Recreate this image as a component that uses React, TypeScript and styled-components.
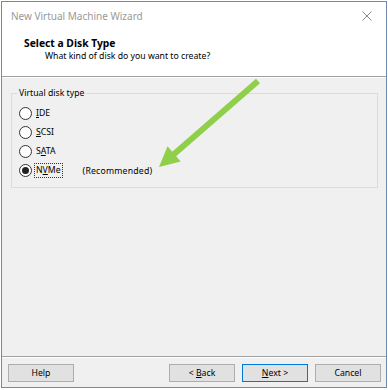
import styled, { createGlobalStyle } from 'styled-components';

const GlobalStyle = createGlobalStyle`
  html, body {
    margin: 0;
    padding: 0;
    background: #fff;
  }
  body {
    font-family: 'Noto Sans', 'Liberation Sans', sans-serif;
    font-size: 8.7px;
    color: #000;
  }
`;

const WizardWindow = styled.div`
  position: relative;
  margin: 1px 0 0 1px;
  width: 386px;
  height: 387px;
  box-sizing: border-box;
  border: 1px solid #6f8aab;
  background: #f0f0f0;
  display: flex;
  flex-direction: column;
`;

const TitleBar = styled.div`
  height: 27px;
  background: #fff;
  display: flex;
  align-items: center;
  justify-content: space-between;
  padding: 0 14px 1px 9px;
`;

const TitleText = styled.span`
  font-size: 10px;
  color: #999;
  line-height: 14px;
`;

const Header = styled.div`
  background: #fff;
  height: 47px;
  box-sizing: border-box;
  padding: 7px 0 0 22px;
  border-bottom: 1px solid #a0a0a0;
`;

const HeaderTitle = styled.div`
  font-weight: 700;
  font-size: 10.3px;
  line-height: 13px;
`;

const HeaderSubtitle = styled.div`
  line-height: 12px;
  padding-left: 21px;
`;

const Body = styled.div`
  flex: 1;
  padding: 8px 8px 0 9px;
  border-top: 1px solid #fff;
`;

const GroupBox = styled.fieldset`
  margin: 0;
  border: 1px solid #dcdcdc;
  padding: 4px 8px 5px 6px;
  height: 102px;
  box-sizing: border-box;
`;

const GroupLegend = styled.legend`
  padding: 0 2px;
  margin-left: -1px;
  line-height: 14px;
`;

const RadioRow = styled.label`
  display: flex;
  align-items: center;
  height: 19px;
`;

const RadioCircle = styled.span<{ $checked?: boolean }>`
  width: 13px;
  height: 13px;
  box-sizing: border-box;
  border-radius: 50%;
  border: 1px solid #333;
  background: #fff;
  margin: 0 3px 0 1px;
  display: flex;
  align-items: center;
  justify-content: center;

  &::after {
    content: '';
    display: ${p => (p.$checked ? 'block' : 'none')};
    width: 7px;
    height: 7px;
    border-radius: 50%;
    background: #222;
  }
`;

const RadioLabel = styled.span<{ $focused?: boolean }>`
  line-height: 13px;
  padding: 0 1px;
  outline: ${p => (p.$focused ? '1px dotted #333' : 'none')};
`;

const Hint = styled.span`
  margin-left: 21px;
  letter-spacing: 0.2px;
`;

const Footer = styled.div`
  border-top: 1px solid #a0a0a0;
  box-shadow: inset 0 1px 0 #fff;
  display: flex;
  align-items: center;
  padding: 7px 5px 5px 6px;
  gap: 7px;
`;

const Spacer = styled.div`
  flex: 1;
`;

const Button = styled.button<{ $default?: boolean }>`
  width: 66px;
  height: 18px;
  box-sizing: border-box;
  margin: 0;
  padding: 0;
  background: #e1e1e1;
  border: 1px solid ${p => (p.$default ? '#0078d7' : '#adadad')};
  font-family: inherit;
  font-size: 8.7px;
  color: #000;
`;

const Key = styled.span`
  text-decoration: underline;
`;

const Overlay = styled.svg`
  position: absolute;
  left: -1px;
  top: -1px;
  pointer-events: none;
`;

const diskTypes = [
  { id: 'ide', before: '', key: 'I', after: 'DE' },
  { id: 'scsi', before: '', key: 'S', after: 'CSI' },
  { id: 'sata', before: 'S', key: 'A', after: 'TA' },
  { id: 'nvme', before: 'N', key: 'V', after: 'Me' },
];

export default function App() {
  const selected = 'nvme';
  return (
    <>
      <GlobalStyle />
      <WizardWindow>
        <TitleBar>
          <TitleText>New Virtual Machine Wizard</TitleText>
          <svg width="10" height="10" viewBox="0 0 10 10">
            <path d="M0.5 0.5 L9.5 9.5 M9.5 0.5 L0.5 9.5" stroke="#8a8a8a" strokeWidth="1" />
          </svg>
        </TitleBar>
        <Header>
          <HeaderTitle>Select a Disk Type</HeaderTitle>
          <HeaderSubtitle>What kind of disk do you want to create?</HeaderSubtitle>
        </Header>
        <Body>
          <GroupBox>
            <GroupLegend>Virtual disk type</GroupLegend>
            {diskTypes.map(d => (
              <RadioRow key={d.id}>
                <RadioCircle $checked={d.id === selected} />
                <RadioLabel $focused={d.id === selected}>
                  {d.before}
                  <Key>{d.key}</Key>
                  {d.after}
                </RadioLabel>
                {d.id === 'nvme' && <Hint>(Recommended)</Hint>}
              </RadioRow>
            ))}
          </GroupBox>
        </Body>
        <Footer>
          <Button>Help</Button>
          <Spacer />
          <Button>
            &lt; <Key>B</Key>ack
          </Button>
          <Button $default>
            <Key>N</Key>ext &gt;
          </Button>
          <Button>Cancel</Button>
        </Footer>
        <Overlay width="388" height="390" viewBox="0 0 388 390">
          <line x1="257" y1="80" x2="172" y2="154" stroke="#8fcf4a" strokeWidth="6" />
          <polygon points="158,166 166.5,145.3 179.7,160.5" fill="#8fcf4a" />
        </Overlay>
      </WizardWindow>
    </>
  );
}
